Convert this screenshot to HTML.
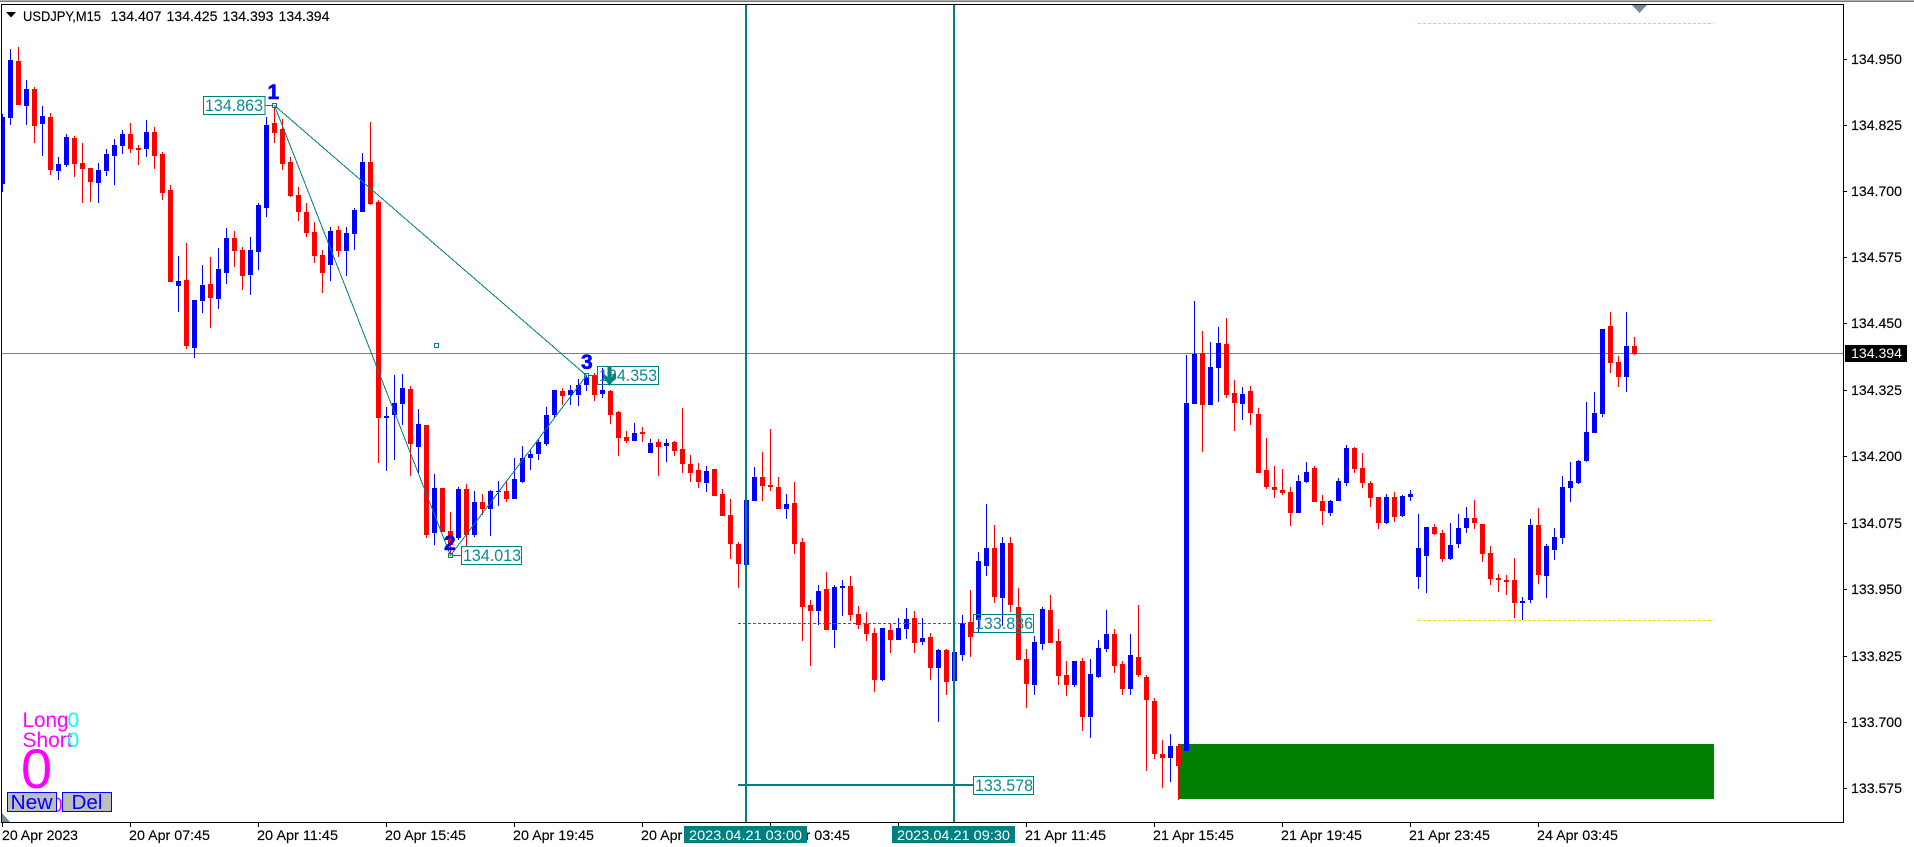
<!DOCTYPE html>
<html lang="en">
<head>
<meta charset="utf-8">
<title>USDJPY,M15</title>
<style>
html,body{margin:0;padding:0;background:#fff;width:1914px;height:847px;overflow:hidden}
svg{display:block}
text{font-family:"Liberation Sans",Arial,sans-serif;white-space:pre}
.ax{font-size:14px;fill:#000;stroke:#000;stroke-width:.15}
.lb{font-size:17px;fill:#0a8a94}
</style>
</head>
<body>
<svg xmlns="http://www.w3.org/2000/svg" width="1914" height="847" viewBox="0 0 1914 847">
<defs><clipPath id="c"><rect x="2" y="5" width="1841" height="817"/></clipPath></defs>
<rect width="1914" height="847" fill="#fff"/>
<g shape-rendering="crispEdges">
<rect x="0" y="0" width="1914" height="1" fill="#b0b0b0"/>
<rect x="0" y="1" width="1914" height="1" fill="#777"/>
<rect x="1" y="4" width="1843" height="1" fill="#000"/>
<rect x="1" y="4" width="1" height="819" fill="#000"/>
<rect x="1843" y="4" width="1" height="819" fill="#000"/>
<rect x="1" y="822" width="1843" height="1" fill="#000"/>
</g>
<g clip-path="url(#c)">
<g shape-rendering="crispEdges">
<path d="M1418 23.5H1714M1418 620.5H1714" stroke="#ffd700" stroke-width="1" stroke-dasharray="3 2" fill="none"/>
<rect x="2" y="353" width="1841" height="1" fill="#808080"/>
<rect x="1179" y="744" width="535" height="55" fill="#008000"/>
<path shape-rendering="geometricPrecision" fill="none" stroke="#00f" stroke-width="1" d="M2.5 114V192M10.5 49V125M26.5 80V125M42.5 106V156M58.5 157V180M66.5 134V167M98.5 163V203M106.5 149V176M114.5 139V185M122.5 130V154M146.5 120V157M178.5 256V312M194.5 300V358M202.5 265V313M218.5 248V309M226.5 228V284M250.5 237V295M258.5 203V270M266.5 117V217M330.5 227V281M346.5 227V276M354.5 208V250M362.5 153V212M386.5 407V471M394.5 375V460M402.5 374V425M418.5 409V473M434.5 474V545M458.5 487V540M474.5 491V537M490.5 490V536M498.5 481V506M514.5 458V499M522.5 446V483M530.5 449V470M538.5 439V460M546.5 407V446M554.5 390V418M570.5 385V405M578.5 379V406M586.5 375V391M602.5 368V398M634.5 423V441M650.5 439V453M666.5 439V462M706.5 466V492M746.5 500V565M754.5 467V501M786.5 494V519M818.5 585V625M834.5 585V648M842.5 580V616M882.5 628V681M898.5 618V640M906.5 608V639M922.5 618V645M938.5 649V722M954.5 650V681M962.5 615V661M978.5 552V632M986.5 504V576M1002.5 537V626M1034.5 636V695M1042.5 607V650M1074.5 661V687M1090.5 659V738M1098.5 640V678M1106.5 610V652M1130.5 634V695M1170.5 734V782M1186.5 355V751M1194.5 301V404M1210.5 342V405M1218.5 327V402M1242.5 387V420M1298.5 475V513M1306.5 462V483M1330.5 500V516M1338.5 478V501M1346.5 445V486M1386.5 494V524M1402.5 495V517M1410.5 490V501M1418.5 514V589M1426.5 527V593M1450.5 523V560M1458.5 514V548M1466.5 507V533M1522.5 597V620M1530.5 519V603M1546.5 544V598M1554.5 528V560M1562.5 476V544M1570.5 462V502M1578.5 460V484M1586.5 402V462M1594.5 392V433M1602.5 329V417M1626.5 312V392"/>
<path shape-rendering="geometricPrecision" fill="none" stroke="#00f" stroke-width="5" d="M2.5 117V184M10.5 60V118M26.5 89V106M42.5 116V124M58.5 164V171M66.5 137V165M98.5 170V183M106.5 154V171M114.5 145V156M122.5 134V146M146.5 132V149M178.5 281V286M194.5 300V348M202.5 285V301M218.5 269V299M226.5 238V273M250.5 250V275M258.5 205V252M266.5 125V208M330.5 231V265M346.5 233V251M354.5 210V234M362.5 162V212M386.5 416V418M394.5 403V415M402.5 388V404M418.5 424V447M434.5 488V533M458.5 489V538M474.5 502V535M490.5 491V509M498.5 491V492M514.5 479V499M522.5 458V482M530.5 454V458M538.5 442V454M546.5 415V444M554.5 390V415M570.5 390V395M578.5 385V395M586.5 378V385M602.5 390V394M634.5 433V441M650.5 443V453M666.5 443V446M706.5 471V483M746.5 500V565M754.5 477V501M786.5 504V509M818.5 591V611M834.5 587V630M842.5 586V588M882.5 628V680M898.5 628V640M906.5 619V629M922.5 638V642M938.5 650V668M954.5 652V681M962.5 623V655M978.5 561V620M986.5 548V566M1002.5 543V598M1034.5 642V685M1042.5 609V644M1074.5 661V685M1090.5 674V717M1098.5 648V677M1106.5 634V649M1130.5 655V689M1170.5 746V758M1186.5 403V751M1194.5 354V404M1210.5 367V405M1218.5 343V368M1242.5 394V404M1298.5 481V513M1306.5 472V482M1330.5 501V513M1338.5 481V501M1346.5 448V483M1386.5 497V523M1402.5 496V516M1410.5 494V497M1418.5 548V577M1426.5 527V556M1450.5 545V559M1458.5 528V544M1466.5 518V528M1522.5 601V603M1530.5 525V600M1546.5 546V576M1554.5 537V550M1562.5 487V538M1570.5 481V488M1578.5 461V483M1586.5 432V461M1594.5 413V433M1602.5 329V414M1626.5 346V377"/>
<path shape-rendering="geometricPrecision" fill="none" stroke="#f00" stroke-width="1" d="M18.5 47V105M34.5 87V143M50.5 113V175M74.5 136V177M82.5 143V203M90.5 168V202M130.5 123V153M138.5 145V165M154.5 127V169M162.5 152V200M170.5 185V282M186.5 243V349M210.5 257V328M234.5 231V267M242.5 247V290M274.5 107V143M282.5 119V170M290.5 157V197M298.5 187V221M306.5 203V237M314.5 222V263M322.5 250V293M338.5 226V257M370.5 122V205M378.5 200V463M410.5 386V476M426.5 425V538M442.5 488V532M450.5 512V553M466.5 484V547M482.5 494V515M506.5 482V502M562.5 388V405M594.5 373V401M610.5 390V424M618.5 411V456M626.5 431V443M642.5 427V442M658.5 439V476M674.5 441V456M682.5 408V473M690.5 455V482M698.5 463V488M714.5 469V496M722.5 489V516M730.5 499V559M738.5 542V588M762.5 452V501M770.5 429V491M778.5 477V509M794.5 482V554M802.5 538V641M810.5 600V666M826.5 572V630M850.5 576V621M858.5 606V629M866.5 612V641M874.5 628V692M890.5 624V653M914.5 611V653M930.5 633V680M946.5 649V695M970.5 590V657M994.5 525V603M1010.5 537V612M1018.5 588V660M1026.5 649V708M1050.5 595V643M1058.5 629V685M1066.5 661V696M1082.5 658V731M1114.5 629V673M1122.5 661V695M1138.5 605V677M1146.5 675V771M1154.5 698V759M1162.5 740V788M1178.5 744V800M1202.5 331V452M1226.5 318V398M1234.5 380V431M1250.5 386V425M1258.5 408V473M1266.5 438V489M1274.5 466V498M1282.5 469V495M1290.5 487V526M1314.5 466V502M1322.5 495V525M1354.5 447V473M1362.5 453V488M1370.5 481V507M1378.5 497V529M1394.5 492V522M1434.5 524V535M1442.5 530V562M1474.5 500V529M1482.5 524V562M1490.5 546V585M1498.5 574V592M1506.5 575V595M1514.5 558V618M1538.5 508V584M1610.5 312V373M1618.5 356V387M1634.5 337V355"/>
<path shape-rendering="geometricPrecision" fill="none" stroke="#f00" stroke-width="5" d="M18.5 61V105M34.5 89V126M50.5 117V170M74.5 138V164M82.5 163V169M90.5 168V182M130.5 134V149M138.5 148V150M154.5 132V156M162.5 154V193M170.5 190V282M186.5 280V346M210.5 284V298M234.5 238V251M242.5 250V276M274.5 123V133M282.5 129V164M290.5 162V196M298.5 195V212M306.5 212V233M314.5 232V256M322.5 255V273M338.5 230V251M370.5 162V204M378.5 202V418M410.5 389V444M426.5 425V535M442.5 488V532M450.5 531V545M466.5 489V535M482.5 502V509M506.5 491V499M562.5 391V396M594.5 376V395M610.5 391V415M618.5 412V438M626.5 437V441M642.5 432V434M658.5 442V447M674.5 442V451M682.5 449V464M690.5 464V473M698.5 470V482M714.5 469V496M722.5 494V516M730.5 515V544M738.5 544V564M762.5 477V486M770.5 485V487M778.5 487V509M794.5 503V544M802.5 542V607M810.5 605V611M826.5 589V630M850.5 586V615M858.5 614V625M866.5 624V634M874.5 633V680M890.5 630V640M914.5 618V643M930.5 637V668M946.5 650V682M970.5 622V637M994.5 548V597M1010.5 543V605M1018.5 607V660M1026.5 659V684M1050.5 610V643M1058.5 641V676M1066.5 675V685M1082.5 661V717M1114.5 634V666M1122.5 664V689M1138.5 657V675M1146.5 677V700M1154.5 701V754M1162.5 754V758M1178.5 746V766M1202.5 353V405M1226.5 344V395M1234.5 393V403M1250.5 391V413M1258.5 414V473M1266.5 470V487M1274.5 487V490M1282.5 490V493M1290.5 492V513M1314.5 468V502M1322.5 501V511M1354.5 448V469M1362.5 468V483M1370.5 483V498M1378.5 497V523M1394.5 497V517M1434.5 527V534M1442.5 533V559M1474.5 518V523M1482.5 524V554M1490.5 553V579M1498.5 578V580M1506.5 580V582M1514.5 580V603M1538.5 525V575M1610.5 326V363M1618.5 362V377M1634.5 346V354"/>
<!-- vertical lines / horizontal objects -->
<rect x="745" y="5" width="2" height="817" fill="#008080"/>
<rect x="953" y="5" width="2" height="817" fill="#008080"/>
<path d="M738 623.5H973" stroke="#008080" stroke-width="1" stroke-dasharray="3 2" fill="none"/>
<rect x="738" y="784" width="235" height="2" fill="#008080"/>
<path d="M203.5 96.5H265V114.5H203.5ZM461.5 546.5H521.5V564.5H461.5ZM597.5 366.5H658.5V384.5H597.5ZM973.5 614.5H1033.5V632.5H973.5ZM973.5 776.5H1033.5V794.5H973.5Z" fill="none" stroke="#008080" stroke-width="1"/>
<path d="M265 105.5H272M452 555.5H461M589 375.5H597" stroke="#008080" stroke-width="1" fill="none"/>
<path d="M272.5 103.5h4v4h-4zM448.5 553.5h4v4h-4zM584.5 373.5h4v4h-4zM434.5 343.5h4v4h-4z" fill="none" stroke="#008080" stroke-width="1.2"/>
<path d="M274.5 105.5L450.5 555.5L586.5 375.5L274.5 105.5" fill="none" stroke="#008080" stroke-width="1"/>
</g>
<polygon points="1632,5 1647,5 1639.5,13" fill="#778899"/>
<polygon points="2,813 10,822 2,822" fill="#778899"/>
<text class="lb" x="205" y="111" textLength="58" lengthAdjust="spacingAndGlyphs">134.863</text>
<text class="lb" x="463" y="561" textLength="58" lengthAdjust="spacingAndGlyphs">134.013</text>
<text class="lb" x="599" y="381" textLength="58" lengthAdjust="spacingAndGlyphs">134.353</text>
<text class="lb" x="975" y="629" textLength="58" lengthAdjust="spacingAndGlyphs">133.886</text>
<text class="lb" x="975" y="791" textLength="58" lengthAdjust="spacingAndGlyphs">133.578</text>
<path d="M603 373L607.5 377V367H611.5V377L616 373V376.5L609.5 386L603 376.5Z" fill="#008080"/>
<text x="267.5" y="99" font-size="21" font-weight="700" fill="#00f" stroke="#00f" stroke-width=".6">1</text>
<text x="444" y="550" font-size="21" font-weight="700" fill="#00f" stroke="#00f" stroke-width=".6">2</text>
<text x="581" y="369" font-size="21" font-weight="700" fill="#00f" stroke="#00f" stroke-width=".6">3</text>
<!-- header -->
<polygon points="6,12 16,12 11,17.5" fill="#000"/>
<text class="ax" x="23" y="21" textLength="78" lengthAdjust="spacingAndGlyphs">USDJPY,M15</text>
<text class="ax" x="110.5" y="21" textLength="51" lengthAdjust="spacingAndGlyphs">134.407</text>
<text class="ax" x="166.5" y="21" textLength="51" lengthAdjust="spacingAndGlyphs">134.425</text>
<text class="ax" x="222.5" y="21" textLength="51" lengthAdjust="spacingAndGlyphs">134.393</text>
<text class="ax" x="278.5" y="21" textLength="51" lengthAdjust="spacingAndGlyphs">134.394</text>
<!-- panel -->
<text x="22.5" y="727" font-size="21" fill="#f0f" textLength="46" lengthAdjust="spacingAndGlyphs">Long</text>
<text x="22.5" y="747" font-size="21" fill="#f0f" textLength="50" lengthAdjust="spacingAndGlyphs">Short</text>
<text x="67.5" y="727" font-size="21" fill="#0ff">0</text>
<text x="67.5" y="747" font-size="21" fill="#0ff">0</text>
<text x="21" y="788" font-size="56" fill="#f0f">0</text>
<text x="51" y="812" font-size="21" fill="#f0f">0</text>
<g shape-rendering="crispEdges">
<rect x="7.5" y="792.5" width="49" height="19" fill="#bebebe" stroke="#00f"/>
<rect x="62.5" y="792.5" width="49" height="19" fill="#bebebe" stroke="#00f"/>
</g>
<text x="10.5" y="809" font-size="20" fill="#00f" textLength="42" lengthAdjust="spacingAndGlyphs">New</text>
<text x="71.5" y="809" font-size="20" fill="#00f" textLength="31" lengthAdjust="spacingAndGlyphs">Del</text>
</g>
<!-- price axis -->
<path shape-rendering="crispEdges" stroke="#000" stroke-width="1" fill="none" d="M1844 59.5h3M1844 125.5h3M1844 191.5h3M1844 257.5h3M1844 323.5h3M1844 390.5h3M1844 456.5h3M1844 523.5h3M1844 589.5h3M1844 656.5h3M1844 722.5h3M1844 788.5h3"/>
<text class="ax" x="1851" y="64" textLength="51" lengthAdjust="spacingAndGlyphs">134.950</text>
<text class="ax" x="1851" y="130" textLength="51" lengthAdjust="spacingAndGlyphs">134.825</text>
<text class="ax" x="1851" y="196" textLength="51" lengthAdjust="spacingAndGlyphs">134.700</text>
<text class="ax" x="1851" y="262" textLength="51" lengthAdjust="spacingAndGlyphs">134.575</text>
<text class="ax" x="1851" y="328" textLength="51" lengthAdjust="spacingAndGlyphs">134.450</text>
<text class="ax" x="1851" y="395" textLength="51" lengthAdjust="spacingAndGlyphs">134.325</text>
<text class="ax" x="1851" y="461" textLength="51" lengthAdjust="spacingAndGlyphs">134.200</text>
<text class="ax" x="1851" y="528" textLength="51" lengthAdjust="spacingAndGlyphs">134.075</text>
<text class="ax" x="1851" y="594" textLength="51" lengthAdjust="spacingAndGlyphs">133.950</text>
<text class="ax" x="1851" y="661" textLength="51" lengthAdjust="spacingAndGlyphs">133.825</text>
<text class="ax" x="1851" y="727" textLength="51" lengthAdjust="spacingAndGlyphs">133.700</text>
<text class="ax" x="1851" y="793" textLength="51" lengthAdjust="spacingAndGlyphs">133.575</text>
<rect x="1845" y="345" width="62" height="17" fill="#000" shape-rendering="crispEdges"/>
<text x="1851" y="358" font-size="14" fill="#fff" textLength="51" lengthAdjust="spacingAndGlyphs">134.394</text>
<!-- time axis -->
<path shape-rendering="crispEdges" stroke="#000" stroke-width="1" fill="none" d="M2.5 823v4M130.5 823v4M258.5 823v4M386.5 823v4M514.5 823v4M642.5 823v4M770.5 823v4M898.5 823v4M1026.5 823v4M1154.5 823v4M1282.5 823v4M1410.5 823v4M1538.5 823v4"/>
<text class="ax" x="2" y="840" textLength="76" lengthAdjust="spacingAndGlyphs">20 Apr 2023</text>
<text class="ax" x="129" y="840" textLength="81" lengthAdjust="spacingAndGlyphs">20 Apr 07:45</text>
<text class="ax" x="257" y="840" textLength="81" lengthAdjust="spacingAndGlyphs">20 Apr 11:45</text>
<text class="ax" x="385" y="840" textLength="81" lengthAdjust="spacingAndGlyphs">20 Apr 15:45</text>
<text class="ax" x="513" y="840" textLength="81" lengthAdjust="spacingAndGlyphs">20 Apr 19:45</text>
<text class="ax" x="641" y="840" textLength="81" lengthAdjust="spacingAndGlyphs">20 Apr 23:45</text>
<text class="ax" x="769" y="840" textLength="81" lengthAdjust="spacingAndGlyphs">21 Apr 03:45</text>
<text class="ax" x="897" y="840" textLength="81" lengthAdjust="spacingAndGlyphs">21 Apr 07:45</text>
<text class="ax" x="1025" y="840" textLength="81" lengthAdjust="spacingAndGlyphs">21 Apr 11:45</text>
<text class="ax" x="1153" y="840" textLength="81" lengthAdjust="spacingAndGlyphs">21 Apr 15:45</text>
<text class="ax" x="1281" y="840" textLength="81" lengthAdjust="spacingAndGlyphs">21 Apr 19:45</text>
<text class="ax" x="1409" y="840" textLength="81" lengthAdjust="spacingAndGlyphs">21 Apr 23:45</text>
<text class="ax" x="1537" y="840" textLength="81" lengthAdjust="spacingAndGlyphs">24 Apr 03:45</text>
<rect x="684" y="826" width="123" height="17" fill="#008080" shape-rendering="crispEdges"/>
<rect x="892" y="826" width="123" height="17" fill="#008080" shape-rendering="crispEdges"/>
<text x="689" y="840" font-size="14" fill="#fff" textLength="113" lengthAdjust="spacingAndGlyphs">2023.04.21 03:00</text>
<text x="897" y="840" font-size="14" fill="#fff" textLength="113" lengthAdjust="spacingAndGlyphs">2023.04.21 09:30</text>
</svg>
</body>
</html>
